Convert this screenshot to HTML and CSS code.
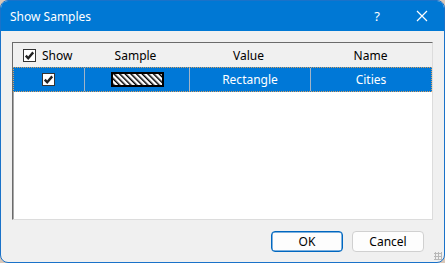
FILE: index.html
```html
<!DOCTYPE html>
<html lang="en">
<head>
  <meta charset="UTF-8" />
  <title>Show Samples</title>
  <link rel="stylesheet" href="styles.css">
</head>
<body>
  <div class="window">
    <div class="titlebar">
      <span class="title">Show Samples</span>
      <span class="help">?</span>
      <svg class="close" width="12" height="12" viewBox="0 0 12 12">
        <path d="M1 1 L11 11 M11 1 L1 11" stroke="#fff" stroke-width="1.2" fill="none"/>
      </svg>
    </div>

    <div class="content">
      <div class="list">
        <div class="row header">
          <div class="cell show-head">
            <svg class="check" width="13" height="13" viewBox="0 0 13 13">
              <rect x="0.5" y="0.5" width="12" height="12" fill="#fff" stroke="#333"/>
              <path d="M2.8 6.6 L5.2 9.2 L10.2 3.4" stroke="#222" stroke-width="2.4" fill="none"/>
            </svg>
            <span>Show</span>
          </div>
          <div class="cell">Sample</div>
          <div class="cell">Value</div>
          <div class="cell">Name</div>
        </div>

        <div class="row selected">
          <div class="cell">
            <svg class="check" width="13" height="13" viewBox="0 0 13 13">
              <rect x="0.5" y="0.5" width="12" height="12" fill="#fff" stroke="#333"/>
              <path d="M2.8 6.6 L5.2 9.2 L10.2 3.4" stroke="#222" stroke-width="2.4" fill="none"/>
            </svg>
          </div>
          <div class="cell">
            <svg class="sample" width="53" height="15" viewBox="0 0 53 15">
              <defs>
                <pattern id="hatch" width="4" height="4" patternUnits="userSpaceOnUse" patternTransform="rotate(-45)">
                  <rect width="4" height="4" fill="#fff"/>
                  <rect width="1.5" height="4" fill="#000"/>
                </pattern>
              </defs>
              <rect x="1" y="1" width="51" height="13" fill="url(#hatch)" stroke="#000" stroke-width="2"/>
            </svg>
          </div>
          <div class="cell">Rectangle</div>
          <div class="cell">Cities</div>
        </div>
      </div>

      <div class="buttons">
        <button class="btn default">OK</button>
        <button class="btn">Cancel</button>
      </div>
    </div>
    <div class="grip"></div>
  </div>
</body>
</html>
```

FILE: styles.css
```css
body {
  margin: 0;
  background: #d9c7b8;
  font-family: 'Noto Sans', 'Open Sans', sans-serif;
  font-size: 12px;
  color: #000;
}

.window {
  position: relative;
  width: 445px;
  height: 263px;
  box-sizing: border-box;
  border: 1px solid #1a72c9;
  border-radius: 8px;
  overflow: hidden;
  background: #f0f0f0;
}

.titlebar {
  height: 30px;
  background: #0078d4;
  color: #fff;
  display: flex;
  align-items: center;
  padding-left: 9px;
}

.title {
  flex: 1;
  font-size: 12px;
}

.help {
  font-size: 13px;
  margin-right: 36px;
}

.close {
  margin-right: 16px;
}

.content {
  padding: 11px 11px 0 11px;
}

.list {
  height: 176px;
  border: 1px solid;
  border-color: #6b6b6b #dcdcdc #dcdcdc #6b6b6b;
  box-shadow: inset 1px 1px 0 #a8a8a8;
  background: #fff;
}

.row {
  display: grid;
  grid-template-columns: 70px 105px 121px 1fr;
  height: 24px;
}

.header {
  background: #f0f0f0;
}

.cell {
  display: flex;
  align-items: center;
  justify-content: center;
}

.show-head {
  justify-content: flex-start;
  padding-left: 10px;
  gap: 6px;
}

.selected {
  background: #0078d7;
  color: #fff;
  box-sizing: border-box;
  border: 1px dotted #d8a060;
  height: 25px;
}

.selected .cell + .cell {
  border-left: 1px solid #a0b4c8;
}

.selected .cell:first-child {
  margin-left: -1px;
}

.buttons {
  display: flex;
  justify-content: flex-end;
  gap: 9px;
  margin-top: 11px;
  padding-right: 9px;
}

.btn {
  width: 72px;
  height: 21px;
  border: 1px solid #d0d0d0;
  border-radius: 4px;
  background: #fdfdfd;
  font-family: 'Noto Sans', 'Open Sans', sans-serif;
  font-size: 12px;
  color: #000;
  padding: 0;
}

.btn.default {
  border-color: #0067c0;
  box-shadow: inset 0 0 0 0.5px #0067c0;
}

.grip {
  position: absolute;
  right: 2px;
  bottom: 2px;
  width: 8px;
  height: 8px;
  background: radial-gradient(circle, #b8b8b8 1px, transparent 1.2px) 0 0 / 3px 3px;
}
```
